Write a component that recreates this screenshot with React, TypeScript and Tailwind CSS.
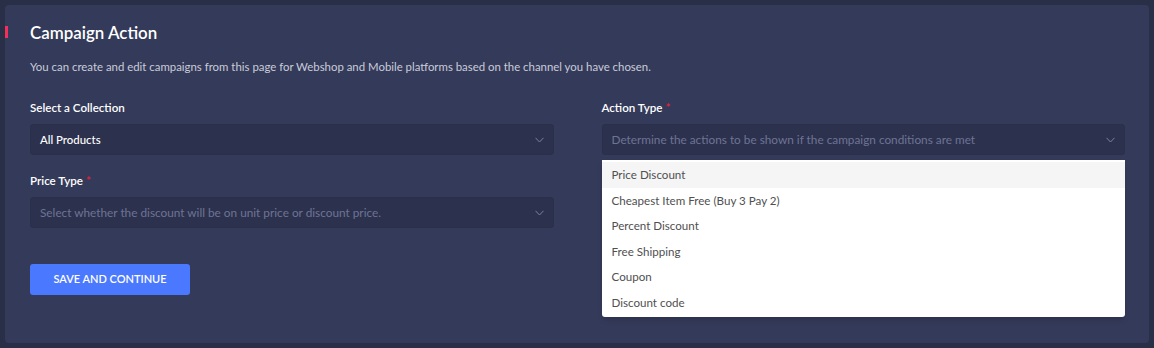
import { useState } from 'react';

const actionTypes = [
    'Price Discount',
    'Cheapest Item Free (Buy 3 Pay 2)',
    'Percent Discount',
    'Free Shipping',
    'Coupon',
    'Discount code',
];

function Chevron() {
    return (
        <svg width="9" height="6" viewBox="0 0 9 6" fill="none" className="shrink-0">
            <path d="M0.5 0.8 L4.5 5 L8.5 0.8" stroke="#7c82a3" strokeWidth="1" />
        </svg>
    );
}

function SelectBox({ value, placeholder }: { value?: string; placeholder: string }) {
    return (
        <div className="h-[31px] rounded-[3px] bg-[#2c314e] border border-[#2a2f4b] flex items-center justify-between pl-[9px] pr-[9px]">
            <span className={value ? 'text-[11.4px] text-white font-medium' : 'text-[11.8px] text-[#6e7494]'}>
                {value ?? placeholder}
            </span>
            <Chevron />
        </div>
    );
}

function Label({ text, required }: { text: string; required?: boolean }) {
    return (
        <label className="block text-[11.6px] leading-4 font-semibold text-white mt-[1px] mb-[8px]">
            {text}
            {required && <span className="text-[#e8203c] ml-[3px]">*</span>}
        </label>
    );
}

export default function App() {
    const [active] = useState(0);

    return (
        <div className="w-[1154px] h-[348px] bg-[#2a2f48] p-[5px] font-['Lato',sans-serif]">
            <div className="h-full w-full bg-[#343a59] rounded-[4px] pt-[16px] pl-[25px] pr-[24px]">

                {/* Header */}
                <div className="relative">
                    <span className="absolute left-[-25px] top-[5px] w-[3px] h-[12px] bg-[#f2305a]" />
                    <h2 className="text-[16.9px] leading-6 font-semibold text-white">Campaign Action</h2>
                </div>
                <p className="mt-[14px] text-[11.4px] leading-4 text-[#c9ccda]">
                    You can create and edit campaigns from this page for Webshop and Mobile platforms based on the channel you have chosen.
                </p>

                <div className="grid grid-cols-2 gap-x-12 mt-[24px]">
                    {/* Left column */}
                    <div>
                        <Label text="Select a Collection" />
                        <SelectBox value="All Products" placeholder="" />

                        <div className="mt-[18px]">
                            <Label text="Price Type" required />
                            <SelectBox placeholder="Select whether the discount will be on unit price or discount price." />
                        </div>

                        <button className="mt-[36px] w-[160px] h-[31px] rounded-[3px] bg-[#4a78ff] text-white text-[11px] font-semibold">
                            SAVE AND CONTINUE
                        </button>
                    </div>

                    {/* Right column */}
                    <div className="relative">
                        <Label text="Action Type" required />
                        <SelectBox placeholder="Determine the actions to be shown if the campaign conditions are met" />

                        <ul className="absolute left-0 right-0 top-[61px] bg-white rounded-b-[3px] shadow-md pt-[2px] pb-[1px]">
                            {actionTypes.map((t, i) => (
                                <li
                                    key={t}
                                    className={`h-[25.6px] flex items-center pl-[10px] text-[11.6px] text-[#505050] ${i === active ? 'bg-[#f5f5f5]' : ''}`}
                                >
                                    {t}
                                </li>
                            ))}
                        </ul>
                    </div>
                </div>

            </div>
        </div>
    );
}
